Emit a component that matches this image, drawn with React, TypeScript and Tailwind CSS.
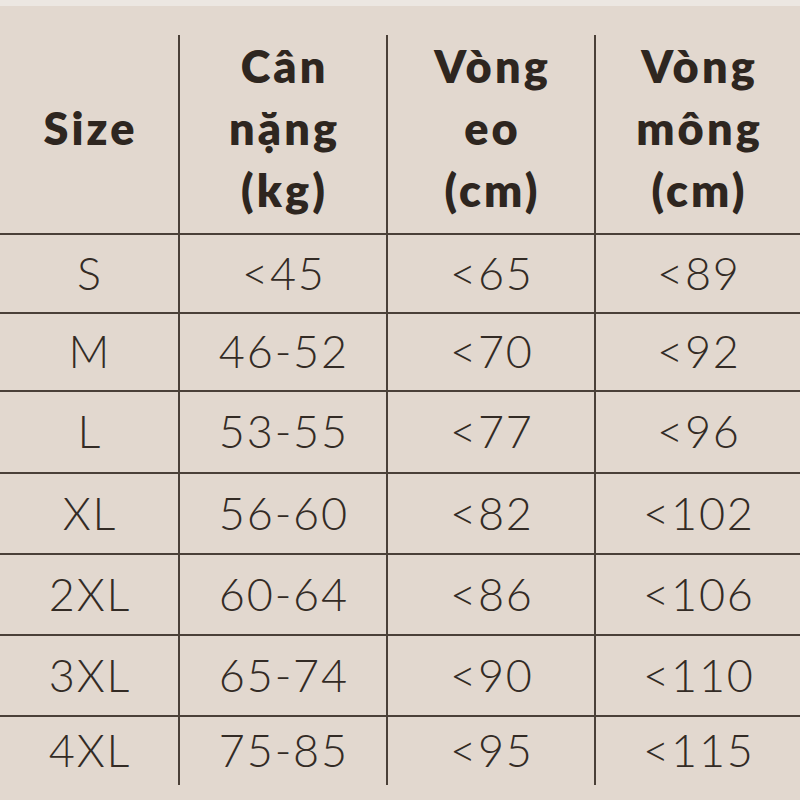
const rows = [
  { size: "S", kg: "<45", eo: "<65", mong: "<89", h: "h-[79px]" },
  { size: "M", kg: "46-52", eo: "<70", mong: "<92", h: "h-[78px]" },
  { size: "L", kg: "53-55", eo: "<77", mong: "<96", h: "h-[82px]" },
  { size: "XL", kg: "56-60", eo: "<82", mong: "<102", h: "h-[81px]" },
  { size: "2XL", kg: "60-64", eo: "<86", mong: "<106", h: "h-[81px]" },
  { size: "3XL", kg: "65-74", eo: "<90", mong: "<110", h: "h-[81px]" },
]

const cols = "grid grid-cols-[180px_208px_208px_1fr]"

function HeadCell({ lines, last }: { lines: string[]; last?: boolean }) {
  return (
    <div
      className={`flex flex-col items-center justify-center pb-[12px] ${last ? "" : "border-r-2 border-[#4a4038]"}`}
    >
      {lines.map((l) => (
        <span key={l} className="leading-[62px] text-[45px] font-extrabold tracking-[0.07em] pl-[0.07em]">
          {l}
        </span>
      ))}
    </div>
  )
}

function Cell({ text, last }: { text: string; last?: boolean }) {
  return (
    <div
      className={`flex items-center justify-center text-[45px] font-light tracking-[0.04em] pl-[0.04em] text-[#332b25] ${last ? "" : "border-r-2 border-[#4a4038]"}`}
    >
      {text}
    </div>
  )
}

export default function App() {
  return (
    <div
      className="w-[800px] h-[800px] bg-[#e2d8cf] text-[#2e2620] overflow-hidden"
      style={{ fontFamily: "Lato, 'Noto Sans', sans-serif" }}
    >
      <div className="h-[6px] bg-[#ece7e2]" />
      <div className="h-[29px]" />

      <div className={`${cols} h-[200px] border-b-2 border-[#4a4038]`}>
        <HeadCell lines={["Size"]} />
        <HeadCell lines={["Cân", "nặng", "(kg)"]} />
        <HeadCell lines={["Vòng", "eo", "(cm)"]} />
        <HeadCell lines={["Vòng", "mông", "(cm)"]} last />
      </div>

      {rows.map((r) => (
        <div key={r.size} className={`${cols} ${r.h} border-b-2 border-[#4a4038]`}>
          <Cell text={r.size} />
          <Cell text={r.kg} />
          <Cell text={r.eo} />
          <Cell text={r.mong} last />
        </div>
      ))}

      <div className={`${cols} h-[68px]`}>
        <Cell text="4XL" />
        <Cell text="75-85" />
        <Cell text="<95" />
        <Cell text="<115" last />
      </div>
    </div>
  )
}
